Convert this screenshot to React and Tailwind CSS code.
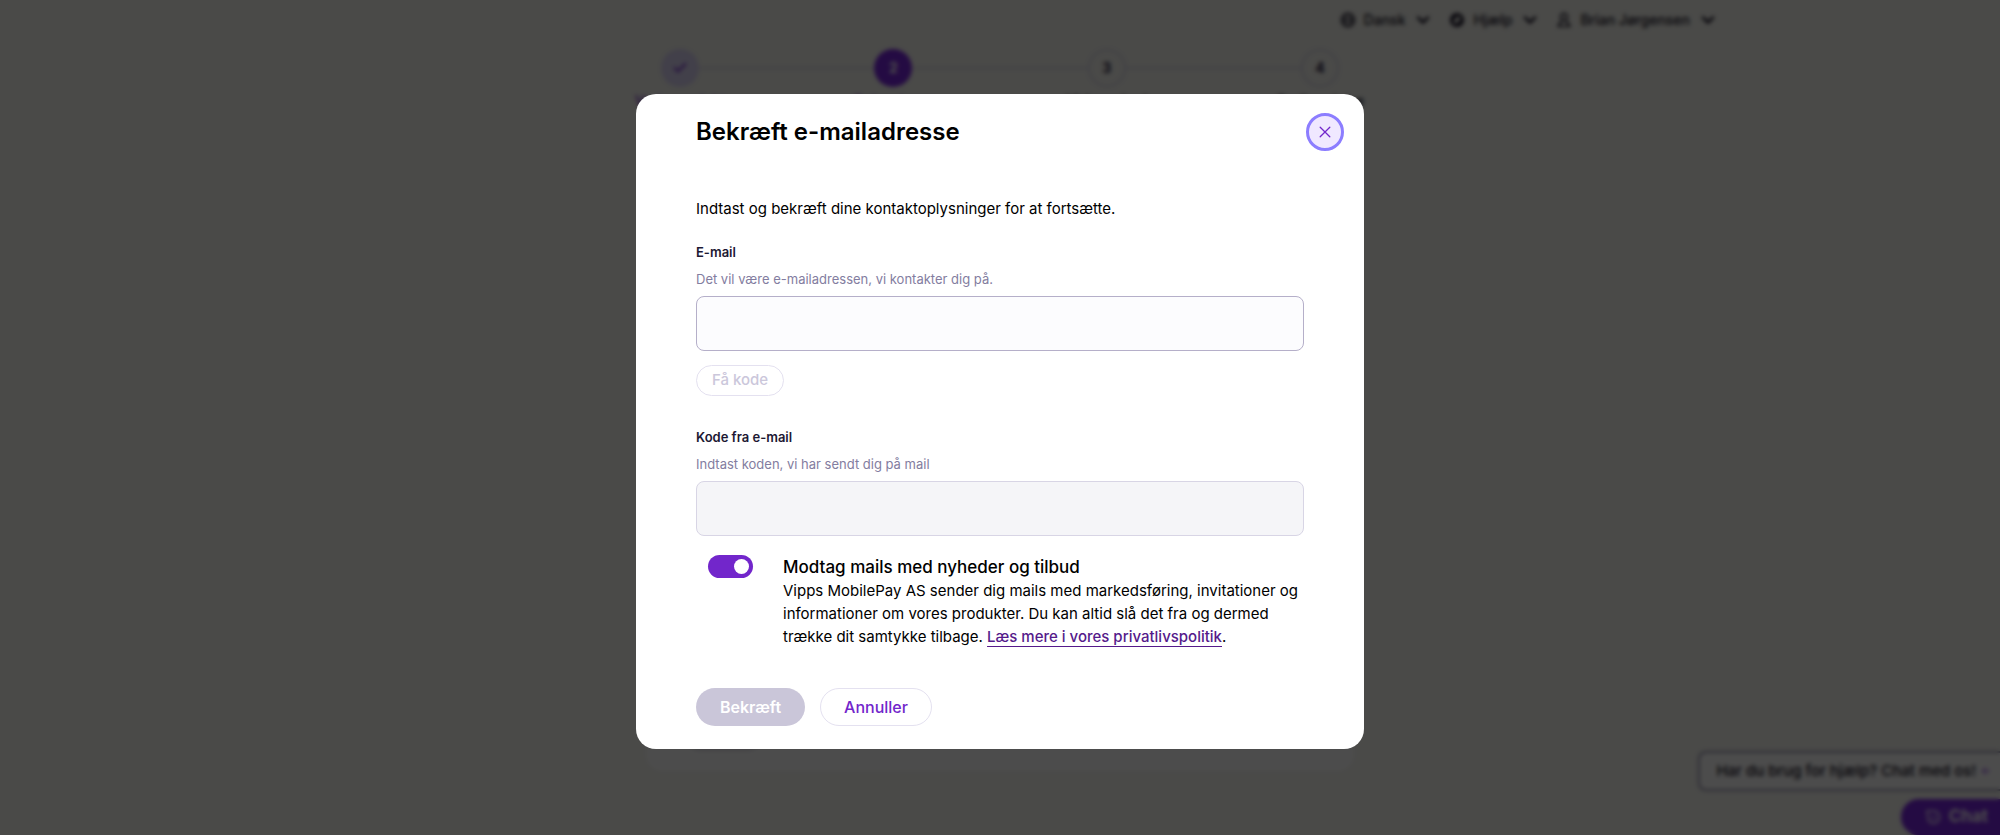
import React, { useState } from 'react';
import { ArrowLeft, Check, ChevronDown } from 'lucide-react';

const steps = [
  { nr: 1, label: 'Vælg produkt', state: 'done' },
  { nr: 2, label: 'Oplysninger', state: 'active' },
  { nr: 3, label: 'Virksomhed', state: 'todo' },
  { nr: 4, label: 'Godkendelse', state: 'todo' },
];

const circleStyles = {
  done: 'bg-[#ddd6f7] text-[#7226cb]',
  active: 'bg-[#7a26e0] text-white',
  todo: 'border-2 border-[#dcdae8] text-[#2a2343]',
};

const labelStyles = {
  done: 'text-[#7226cb]',
  active: 'text-[#7226cb]',
  todo: 'text-[#161225]',
};

const GlobeIcon = () => (
  <svg className="h-4 w-4" viewBox="0 0 16 16" fill="none" stroke="currentColor" strokeWidth="1.5">
    <circle cx="8" cy="8" r="6.5" />
    <ellipse cx="8" cy="8" rx="3" ry="6.5" />
    <path d="M1.5 8h13" />
  </svg>
);

const HelpIcon = () => (
  <svg className="h-4 w-4" viewBox="0 0 16 16" fill="none" stroke="currentColor">
    <circle cx="8" cy="8" r="5.4" strokeWidth="3.2" />
    <path d="M3.5 8L8 3.5M8 12.5L12.5 8" strokeWidth="2" />
  </svg>
);

const UserIcon = () => (
  <svg className="h-4 w-4" viewBox="0 0 16 16" fill="none" stroke="currentColor" strokeWidth="1.6">
    <circle cx="8" cy="5" r="3.4" />
    <path d="M6 8.2L2 14.2h12L10 8.2" strokeLinejoin="round" />
  </svg>
);

const ChatIcon = () => (
  <svg className="h-4 w-4" viewBox="0 0 16 16" fill="none" stroke="currentColor" strokeWidth="1.5" strokeLinejoin="round">
    <path d="M2 2h6.500a6 6 0 1 1-5.200 9z" />
    <path d="M6 8.500h5" />
  </svg>
);

const NavItem = ({ icon, children }) => (
  <button type="button" className="flex items-center gap-2 text-sm font-medium">
    {icon}
    <span>{children}</span>
    <ChevronDown className="h-5 w-5" strokeWidth={3} />
  </button>
);

const Background = () => (
  <div className="flex min-h-screen flex-col bg-[#f7f7f1] text-[#161225]">
    <header className="mx-auto flex h-10 w-full max-w-[1440px] items-center justify-end gap-4 px-0.5">
      <NavItem icon={<GlobeIcon />}>Dansk</NavItem>
      <NavItem icon={<HelpIcon />}>Hjælp</NavItem>
      <NavItem icon={<UserIcon />}>Brian Jørgensen</NavItem>
    </header>

    <main className="mx-auto flex w-full max-w-[708px] grow flex-col pt-[9px] pb-16">
      <ol className="flex justify-between px-[15px]">
        {steps.map((step, i) => (
          <li key={step.nr} className={i < steps.length - 1 ? 'grow basis-0' : ''}>
            <div className="flex items-center">
              <span className={`flex h-[38px] w-[38px] shrink-0 items-center justify-center rounded-full text-sm font-bold ${circleStyles[step.state]}`}>
                {step.state === 'done' ? <Check className="h-4 w-4" strokeWidth={3} /> : step.nr}
              </span>
              {i < steps.length - 1 && <span className="h-0.5 grow bg-[#dcdae8]" />}
            </div>
            <div className="mt-1 flex w-[38px] justify-center">
              <span className={`text-sm font-medium whitespace-nowrap ${labelStyles[step.state]}`}>{step.label}</span>
            </div>
          </li>
        ))}
      </ol>
      <div className="mt-8 flex grow items-end rounded-2xl bg-white pb-5 pl-9">
        <button type="button" className="h-10 w-[84px] rounded-full bg-[#e2e0e8] text-base font-medium text-white">
          Næste
        </button>
      </div>
    </main>
  </div>
);

const ChatWidget = () => (
  <div className="fixed right-0 bottom-0 flex flex-col items-end gap-2">
    <div className="flex h-10 items-center gap-1 rounded-l-lg border-2 border-r-0 border-[#9a96b0] bg-white pr-2 pl-4 text-[15px] font-medium text-[#161225]">
      Har du brug for hjælp? Chat med os!
      <ArrowLeft className="h-3 w-3 text-[#7a26e0]" />
    </div>
    <button type="button" className="flex h-9 items-center gap-2 rounded-l-full bg-[#7a26e0] pr-3 pl-6 text-[17px] font-bold text-white">
      <ChatIcon />
      Chat
    </button>
  </div>
);

const Field = ({ id, label, hint, disabled = false, ...props }) => (
  <div className="flex flex-col">
    <label htmlFor={id} className="text-[13px] leading-5 font-semibold text-[#1d1833]">{label}</label>
    <p id={`${id}-hint`} className="mt-[7px] text-[13px] leading-5 text-[#837da0]">{hint}</p>
    <input
      id={id}
      aria-describedby={`${id}-hint`}
      disabled={disabled}
      className="mt-[7px] h-[55px] w-full rounded-lg border border-[#b5afc9] bg-[#fcfcfe] px-4 outline-none disabled:border-[#d8d5e5] disabled:bg-[#f5f5f8]"
      {...props}
    />
  </div>
);

const EmailDialog = () => {
  const [email, setEmail] = useState('');
  const [newsletter, setNewsletter] = useState(true);

  return (
    <form
      role="dialog"
      aria-labelledby="dialog-title"
      className="w-full max-w-[728px] rounded-[20px] bg-white pt-[19px] pr-5 pb-[23px] pl-[60px] text-black"
      onSubmit={(e) => e.preventDefault()}
    >
      <div className="flex h-[38px] items-center justify-between">
        <h2 id="dialog-title" className="text-2xl font-semibold">Bekræft e-mailadresse</h2>
        <button
          type="button"
          aria-label="Luk"
          className="flex h-[38px] w-[38px] items-center justify-center rounded-full border-3 border-[#8c7dff] bg-[#f0e8ff] text-[#7226cb]"
        >
          <svg className="h-3 w-3" viewBox="0 0 12 12" fill="none" stroke="currentColor" strokeWidth="1.3" strokeLinecap="round">
            <path d="M1.200 1.200l9.600 9.600M10.800 1.200l-9.600 9.600" />
          </svg>
        </button>
      </div>

      <div className="mt-[46px] mr-10 flex flex-col">
        <p className="mb-[22px] text-[15px] leading-[23px]">
          Indtast og bekræft dine kontaktoplysninger for at fortsætte.
        </p>

        <Field
          id="email"
          type="email"
          label="E-mail"
          hint="Det vil være e-mailadressen, vi kontakter dig på."
          value={email}
          onChange={(e) => setEmail(e.target.value)}
        />
        <button
          type="button"
          disabled={!email}
          className="mt-[14px] mb-[31px] h-[31px] w-[88px] rounded-full border border-[#e4e1f0] text-[15px] font-medium text-[#7226cb] disabled:text-[#cbc7db]"
        >
          Få kode
        </button>

        <Field id="code" label="Kode fra e-mail" hint="Indtast koden, vi har sendt dig på mail" disabled />

        <div className="mt-[19px] flex gap-[30px] pl-3">
          <input
            id="newsletter"
            type="checkbox"
            role="switch"
            checked={newsletter}
            onChange={(e) => setNewsletter(e.target.checked)}
            className="h-[23px] w-[45px] shrink-0 appearance-none rounded-full bg-[#c9c5d8] p-1 before:block before:h-[15px] before:w-[15px] before:rounded-full before:bg-white checked:bg-[#7226cb] checked:before:ml-auto"
          />
          <div>
            <label htmlFor="newsletter" className="block text-[17px] leading-6 font-medium">
              Modtag mails med nyheder og tilbud
            </label>
            <p className="text-[15px] leading-[23px]">
              Vipps MobilePay AS sender dig mails med markedsføring, invitationer og informationer om vores produkter. Du kan altid slå det fra og dermed trække dit samtykke tilbage.{' '}
              <a href="#privatliv" className="font-medium text-[#551a8b] underline decoration-1 underline-offset-4">Læs mere i vores privatlivspolitik</a>.
            </p>
          </div>
        </div>

        <div className="mt-10 flex gap-[15px]">
          <button type="submit" disabled className="h-[38px] w-[109px] rounded-full bg-[#cac6d9] text-base font-semibold text-white">
            Bekræft
          </button>
          <button type="button" className="h-[38px] w-[112px] rounded-full border border-[#e4e1f0] text-base font-medium text-[#7226cb]">
            Annuller
          </button>
        </div>
      </div>
    </form>
  );
};

export default function App() {
  return (
    <div className="font-['Inter','Liberation_Sans',sans-serif]">
      <Background />
      <ChatWidget />
      <div className="fixed inset-0 flex items-center justify-center bg-black/70 pt-2 backdrop-blur-[2px]">
        <EmailDialog />
      </div>
    </div>
  );
}
